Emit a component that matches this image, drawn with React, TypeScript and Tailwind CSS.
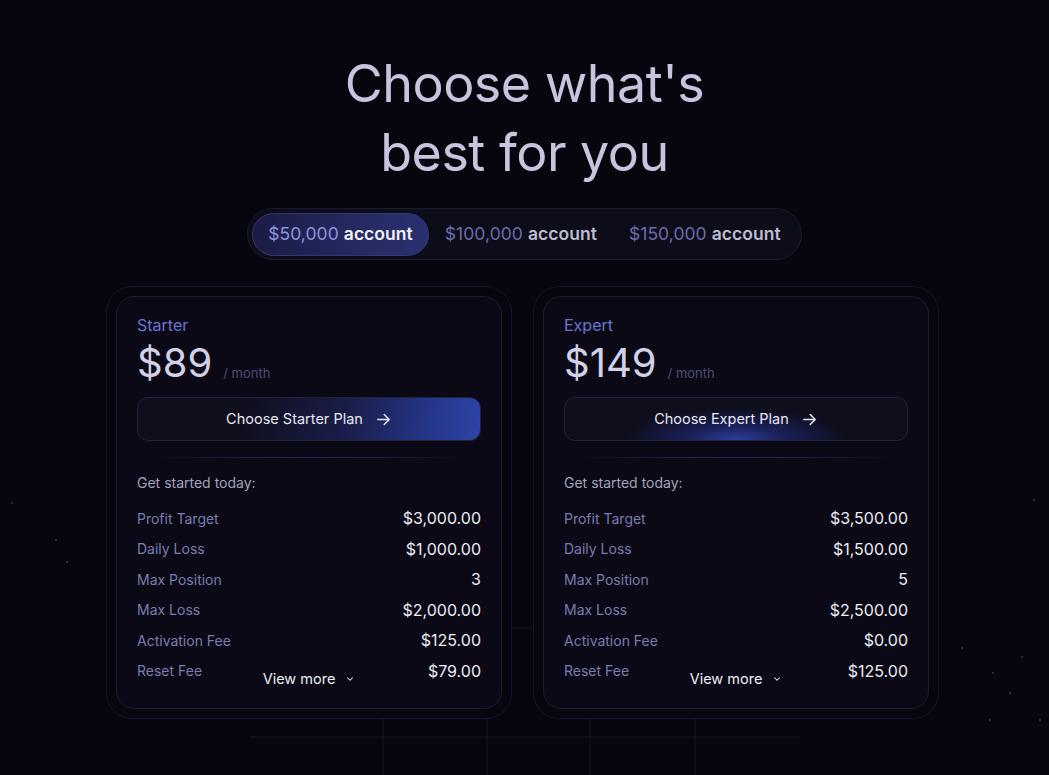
import React from "react";

const font = { fontFamily: "Inter, 'Noto Sans', sans-serif" };

type Plan = {
  name: string;
  price: string;
  cta: string;
  glow: "right" | "center";
  rows: [string, string][];
};

const plans: Plan[] = [
  {
    name: "Starter",
    price: "$89",
    cta: "Choose Starter Plan",
    glow: "right",
    rows: [
      ["Profit Target", "$3,000.00"],
      ["Daily Loss", "$1,000.00"],
      ["Max Position", "3"],
      ["Max Loss", "$2,000.00"],
      ["Activation Fee", "$125.00"],
      ["Reset Fee", "$79.00"],
    ],
  },
  {
    name: "Expert",
    price: "$149",
    cta: "Choose Expert Plan",
    glow: "center",
    rows: [
      ["Profit Target", "$3,500.00"],
      ["Daily Loss", "$1,500.00"],
      ["Max Position", "5"],
      ["Max Loss", "$2,500.00"],
      ["Activation Fee", "$0.00"],
      ["Reset Fee", "$125.00"],
    ],
  },
];

function Arrow() {
  return (
    <svg width="17" height="17" viewBox="0 0 24 24" fill="none" stroke="currentColor" strokeWidth="2.2" strokeLinecap="round" strokeLinejoin="round">
      <path d="M4 12h15" />
      <path d="M13 5l7 7-7 7" />
    </svg>
  );
}

function Chevron() {
  return (
    <svg width="10" height="10" viewBox="0 0 24 24" fill="none" stroke="currentColor" strokeWidth="2.5" strokeLinecap="round" strokeLinejoin="round">
      <path d="M6 9l6 6 6-6" />
    </svg>
  );
}

function Card({ plan }: { plan: Plan }) {
  return (
    <div className="w-[406px] rounded-[26px] border border-[#15142a] bg-[#07060e] p-[9px]">
      <div className="relative rounded-[18px] border border-[#1d1c32] bg-[#0a0915] px-5 pt-[16px] pb-[26px]">
        <div className="text-[16px] leading-6 text-[#6a76cf]">{plan.name}</div>
        <div className="mt-[4px] flex items-end gap-[11px]">
          <span className="text-[40px] leading-[44px] text-[#d2d1e8]">{plan.price}</span>
          <span className="pb-[2px] text-[13px] leading-5 text-[#4c4c76]">/ month</span>
        </div>
        <button
          className={
            "relative mt-[12px] flex h-[44px] w-full items-center justify-center gap-[12px] overflow-hidden rounded-[11px] border border-[#22213a] text-[14.5px] text-[#e6e6f2] " +
            (plan.glow === "right"
              ? "bg-[linear-gradient(100deg,#0f0e1d_0%,#0f0e1d_30%,#1a1d48_60%,#26368a_85%,#2d44a6_100%)]"
              : "bg-[radial-gradient(ellipse_110px_32px_at_50%_100%,#2b3f9c_0%,#1a2058_45%,#0f0e1d_100%)]")
          }
        >
          <span>{plan.cta}</span>
          <Arrow />
        </button>
        <div className="mx-[12px] mt-[16px] h-px bg-[linear-gradient(90deg,transparent,#1d2148_30%,#232a60_50%,#1d2148_70%,transparent)]" />
        <div className="mt-[15px] text-[14px] leading-5 text-[#a3a3bc]">Get started today:</div>
        <div className="mt-[14px] flex flex-col gap-[8.6px]">
          {plan.rows.map(([k, v]) => (
            <div key={k} className="flex h-[22px] items-center justify-between">
              <span className="text-[14px] text-[#7b7dae]">{k}</span>
              <span className="text-[16px] text-[#ececf4]">{v}</span>
            </div>
          ))}
        </div>
        <div className="absolute bottom-[19px] left-0 right-0 flex items-center justify-center gap-[10px] text-[14.5px] leading-5 text-[#eeeef6]">
          <span>View more</span>
          <Chevron />
        </div>
      </div>
    </div>
  );
}

function Backdrop() {
  const dots: [number, number][] = [
    [12, 503], [56, 540], [67, 562], [107, 600], [935, 492], [1034, 500], [962, 648], [1022, 657], [993, 673], [1010, 693], [990, 720], [1040, 720],
  ];
  return (
    <svg className="pointer-events-none absolute inset-0" width="1049" height="775" viewBox="0 0 1049 775">
      <g stroke="#15142a" strokeWidth="1">
        <line x1="383" y1="610" x2="383" y2="775" />
        <line x1="487" y1="610" x2="487" y2="775" />
        <line x1="590" y1="610" x2="590" y2="775" />
        <line x1="695" y1="610" x2="695" y2="775" />
        <line x1="278" y1="628" x2="800" y2="628" />
        <line x1="250" y1="737" x2="800" y2="737" />
      </g>
      <g fill="#2a2946">
        {dots.map(([x, y], i) => (
          <circle key={i} cx={x} cy={y} r="1.2" />
        ))}
      </g>
    </svg>
  );
}

export default function App() {
  return (
    <div className="relative h-[775px] w-[1049px] overflow-hidden bg-[#07060f]" style={font}>
      <Backdrop />
      <div className="relative flex flex-col items-center pt-[49px]">
        <h1 className="text-center text-[52px] font-normal leading-[69px] tracking-[-0.5px] text-[#c6c5dd]">
          Choose what's
          <br />
          best for you
        </h1>
        <div className="mt-[21px] flex h-[52px] items-center rounded-full border border-[#1b1a33] bg-[#0d0c19] p-[4px] text-[17.5px] tracking-[0.05px]">
          <div className="flex h-[43px] items-center gap-[5px] rounded-full border border-[#34386e] bg-[linear-gradient(90deg,#1a1b45,#262a62_60%,#2a3070)] px-[15px]">
            <span className="text-[#8e93dc]">$50,000</span>
            <span className="font-semibold text-[#f2f2fa]">account</span>
          </div>
          <div className="flex h-[43px] items-center gap-[5px] px-[16px]">
            <span className="text-[#6b6dab]">$100,000</span>
            <span className="font-semibold text-[#bdbdd0]">account</span>
          </div>
          <div className="flex h-[43px] items-center gap-[5px] px-[16px]">
            <span className="text-[#6b6dab]">$150,000</span>
            <span className="font-semibold text-[#bdbdd0]">account</span>
          </div>
        </div>
        <div className="mt-[26px] mr-[4px] flex gap-[21px]">
          {plans.map((p) => (
            <Card key={p.name} plan={p} />
          ))}
        </div>
      </div>
    </div>
  );
}
